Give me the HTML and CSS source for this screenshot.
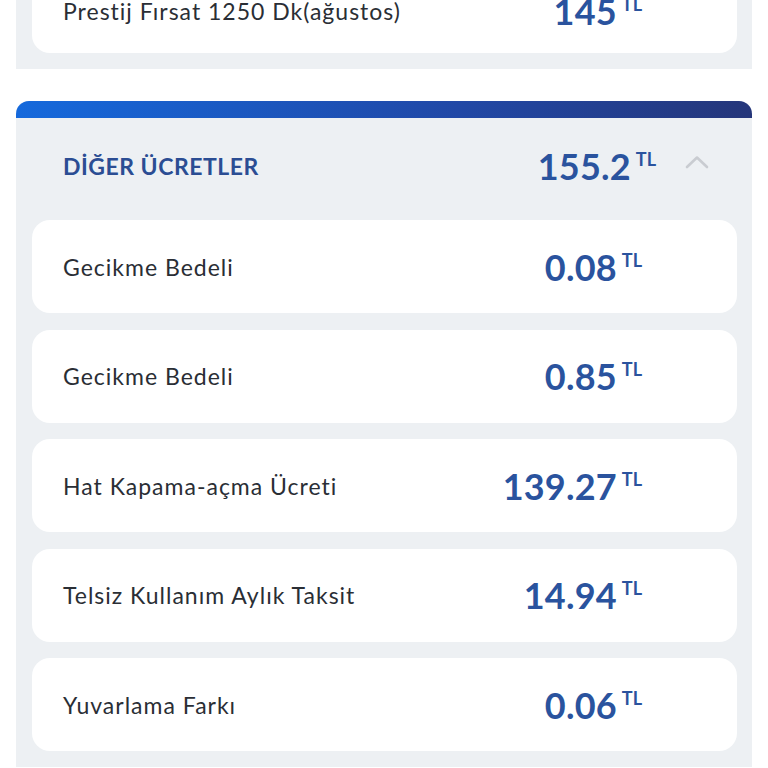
FILE: index.html
```html
<!DOCTYPE html>
<html lang="tr">
<head>
  <meta charset="UTF-8" />
  <meta name="viewport" content="width=device-width, initial-scale=1.0"/>
  <title>Fatura Detayı</title>
  <link rel="stylesheet" href="styles.css">
</head>
<body>
  <!-- previous group, scrolled off the top -->
  <div class="group group-prev">
    <div class="item item-top">
      <span class="item-name">Prestij Fırsat 1250 Dk(ağustos)</span>
      <span class="price">145<sup>TL</sup></span>
    </div>
  </div>

  <!-- Other fees -->
  <div class="group group-open">
    <div class="group-bar"></div>
    <div class="group-head">
      <span class="group-title">DİĞER ÜCRETLER</span>
      <span class="price price-total">155.2<sup>TL</sup></span>
      <svg class="chevron" width="26" height="16" viewBox="0 0 26 16">
        <path d="M3 13 L13 3.5 L23 13" fill="none" stroke="#c9ccd1" stroke-width="2.6" stroke-linecap="round" stroke-linejoin="round"/>
      </svg>
    </div>
    <div class="items">
      <div class="item">
        <span class="item-name">Gecikme Bedeli</span>
        <span class="price">0.08<sup>TL</sup></span>
      </div>
      <div class="item">
        <span class="item-name">Gecikme Bedeli</span>
        <span class="price">0.85<sup>TL</sup></span>
      </div>
      <div class="item">
        <span class="item-name">Hat Kapama-açma Ücreti</span>
        <span class="price">139.27<sup>TL</sup></span>
      </div>
      <div class="item">
        <span class="item-name">Telsiz Kullanım Aylık Taksit</span>
        <span class="price">14.94<sup>TL</sup></span>
      </div>
      <div class="item">
        <span class="item-name">Yuvarlama Farkı</span>
        <span class="price">0.06<sup>TL</sup></span>
      </div>
    </div>
  </div>
</body>
</html>
```

FILE: styles.css
```css
* { box-sizing: border-box; }
body {
  margin: 0;
  padding: 0;
  font-family: 'Lato', 'Noto Sans', sans-serif;
  background: #ffffff;
  color: #2a2e35;
  overflow: hidden;
}
.group {
  margin: 0 16px;
  background: #edf0f3;
}
.group-prev {
  margin-top: -38px;
  padding: 0 15px 14px 16px;
}
.group-prev .item {
  height: 91px;
  margin-bottom: 2px;
  padding-top: 6px;
}
.group-open {
  margin-top: 32px;
  border-radius: 13px 13px 0 0;
  overflow: hidden;
  padding-bottom: 16px;
}
.group-bar {
  height: 17px;
  background: linear-gradient(90deg, #1569dc 0%, #2148a6 60%, #25367a 100%);
}
.group-head {
  height: 96px;
  margin-bottom: 6px;
  display: flex;
  align-items: center;
  padding: 0 42px 0 47px;
}
.group-title {
  flex: 1;
  font-size: 23px;
  font-weight: 700;
  color: #2b4d93;
  letter-spacing: 0.5px;
}
.items {
  display: flex;
  flex-direction: column;
  gap: 16.5px;
  padding: 0 15px 0 16px;
}
.item {
  height: 93px;
  background: #ffffff;
  border-radius: 18px;
  display: flex;
  align-items: center;
  padding: 0 95px 0 31px;
}
.item-name {
  flex: 1;
  font-size: 23px;
  letter-spacing: 1px;
}
.price {
  font-size: 36px;
  font-weight: 700;
  color: #2a539e;
  line-height: 1;
  letter-spacing: 0.2px;
}
.price sup {
  font-size: 18px;
  margin-left: 5px;
  vertical-align: 14px;
  line-height: 0;
  letter-spacing: 0;
}
.price-total {
  margin-right: 28px;
}
.chevron {
  display: block;
  margin-top: -8px;
}
```
